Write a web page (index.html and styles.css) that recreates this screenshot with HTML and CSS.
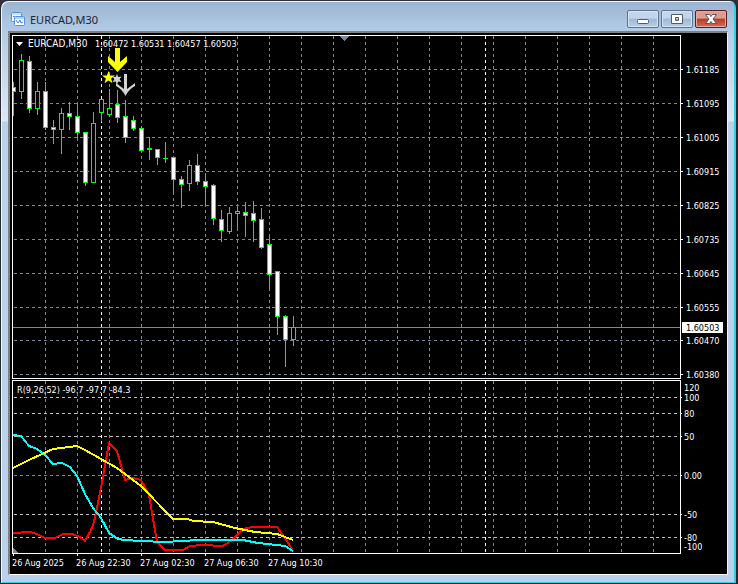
FILE: index.html
```html
<!DOCTYPE html>
<html lang="en">
<head>
<meta charset="utf-8">
<title>EURCAD,M30</title>
<link rel="stylesheet" href="styles.css">
</head>
<body>
<main class="window">
  <header class="titlebar">
    <svg class="app-icon" width="14" height="14" viewBox="0 0 14 14" aria-hidden="true">
      <rect x="0.5" y="0.5" width="10" height="9" rx="1" fill="#fff" stroke="#4f94e0"/>
      <path d="M1 2h9" stroke="#8fbdf0"/>
      <path d="M2 5l1-1 1 2" fill="none" stroke="#3c86dc"/>
      <rect x="3.500" y="4.500" width="10" height="9" rx="1" fill="#fff" stroke="#4f94e0"/>
      <path d="M4 6h9" stroke="#6ba8ea"/>
      <path d="M5 8l2 3 2-3 1 3 2-1" fill="none" stroke="#3c86dc"/>
    </svg>
    <h1 class="title">EURCAD,M30</h1>
    <div class="controls">
      <button class="control" type="button" aria-label="Minimize">
        <svg width="30" height="16" viewBox="0 0 30 16"><rect x="9.500" y="8.500" width="11" height="4" rx="1" fill="#fff" stroke="#535b68"/></svg>
      </button>
      <button class="control" type="button" aria-label="Maximize">
        <svg width="30" height="16" viewBox="0 0 30 16"><path d="M9.500 3.500h11v9h-11z M13.500 6.500v3h3v-3z" fill="#fff" fill-rule="evenodd" stroke="#535b68"/></svg>
      </button>
      <button class="control control-close" type="button" aria-label="Close">
        <svg width="30" height="16" viewBox="0 0 30 16"><path d="M9.500 3.500h4l1.500 2 1.500-2h4l-3.500 4.500 3.500 4.500h-4l-1.500-2-1.500 2h-4l3.500-4.500z" fill="#fff" stroke="#535666"/></svg>
      </button>
    </div>
  </header>
  <section class="client">
    <svg class="chart" viewBox="10 33 717 540" role="img" aria-label="EURCAD M30 candlestick chart with R indicator">
      <g class="crisp">
        <g id="grid"></g>
        <g id="levels"></g>
        <path class="bid" d="M13 327.500H680"/>
        <g id="candles"></g>
        <path class="frame" d="M12.500 378.500V35.500H680.500V378.500H12M12.500 553.500V380.500H680.500V553.500H12"/>
        <path class="ticks" id="ticks"/>
        <path class="marker" d="M340 36h9l-4.500 5z M13 548v5h5z"/>
        <path class="line red" d="M13 533L30 532 37 534 45 538H55L63 534H72L80 537 85 541 91 530 94 522 101 488 109 443 117 451 125 480 133 478 141 480 149 495 157 542 165 550H183L190 546 202 545 223 546 231 541 240 532 246 528 255 527H277L285 538 293 551"/>
        <path class="line cyan" d="M13 435L21 436 29 446 37 449 45 455 53 464 62 463 70 467 77 476 85 494 93 508 101 518 109 533 118 539 125 540 141 541 165 542 198 540H243L258 543 268 544 285 546 293 551"/>
        <path class="line yellow" d="M13 468L29 460 53 449 77 446 85 450 101 459 117 468 141 486 173 519H188L193 521 213 522 235 528 255 532 277 534 293 540"/>
      </g>
      <path class="title-mark" d="M16 42h7l-3.500 4z"/>
      <text class="label label-symbol" x="28" y="47">EURCAD,M30</text>
      <text class="label" x="95" y="47">1.60472 1.60531 1.60457 1.60503</text>
      <text class="label" x="17" y="393">R(9,26,52) -96.7 -97.7 -84.3</text>
      <path fill="#ff0" d="M115 48h5v14l7-6v6l-9.500 10-9.500-10v-6l7 6z"/>
      <path fill="#ff0" d="M108.500 71l1.600 4.600h4.900l-3.900 3 1.400 4.600-4-2.800-4 2.800 1.400-4.600-3.900-3h4.900z"/>
      <path fill="#d3d3d3" d="M117 74l1.300 3 3.200-.4-1.900 2.700 1.900 2.700-3.200-.4-1.300 3-1.300-3-3.200.4 1.900-2.700-1.900-2.700 3.200.4z"/>
      <path fill="#d3d3d3" d="M124 74h3v15l8-6v3q-6 3-9.500 10-3.500-7-9.500-10v-3l8 6z"/>
      <g id="axis"></g>
      <rect x="682" y="322" width="41" height="11" fill="#fff"/>
      <text class="label label-bid" x="686" y="331">1.60503</text>
    </svg>
  </section>
</main>
<script src="chart.js"></script>
</body>
</html>
```
FILE: styles.css
```css
* { box-sizing: border-box; }

body {
  margin: 0;
  background: #33303a;
  font-family: "Noto Sans", "Open Sans", sans-serif;
}

.window {
  display: flex;
  flex-direction: column;
  min-height: 100vh;
  padding: 0 8px 8px 7px;
  border: solid;
  border-width: 1px 2px 1px 1px;
  border-color: #33303a #242833 #111;
  border-radius: 8px 8px 0 0;
  background:
    linear-gradient(#99b4d1, #b4cce7 31px, #dce7f5 120px, #b9d1ea 121px);
  box-shadow: inset 1px 1px #f2f7fc, inset -2px -1px #2fd0e8;
}

.titlebar {
  display: flex;
  align-items: center;
  gap: 5px;
  height: 30px;
  padding: 6px 1px 0 3px;
}

.app-icon { flex: none; }

.title {
  flex: 1;
  margin: 0;
  padding-top: 1px;
  font-size: 11px;
  font-weight: 400;
  line-height: 16px;
  color: #1c2430;
}

.controls { display: flex; gap: 2px; }

.control {
  width: 32px;
  height: 18px;
  padding: 0;
  border: 1px solid #5b7391;
  border-radius: 2px;
  background: linear-gradient(#c3d5ea 45%, #9fb9d6 50%, #b7cfe8);
  box-shadow: inset 0 0 0 1px #d5e3f2;
}

.control svg { display: block; }

.control-close {
  border-color: #5a1c20;
  background: linear-gradient(#dc9c90 45%, #b93a24 50%, #cf7058);
  box-shadow: inset 0 0 0 1px #e3aaa0;
}

.client {
  flex: 1;
  border: solid;
  border-width: 2px 1px 1px 2px;
  border-color: #808080 #f4f4f4 #fff #808080;
  background: #000;
}

.chart { display: block; width: 100%; height: auto; }
.crisp { shape-rendering: crispEdges; }
.chart path { stroke-width: 1px; }
.frame, .ticks { fill: none; stroke: #fff; }
.grid { fill: none; stroke: #778899; stroke-dasharray: 3 3; }
.day { fill: none; stroke: #fff; stroke-dasharray: 3 3; }
.level { fill: none; stroke: #c0c0c0; stroke-dasharray: 3 3; }
.bid { stroke: #778899; }
.marker { fill: #778899; }
.title-mark { fill: #fff; }
.wick { fill: none; stroke: #0f0; }
.bull { fill: #000; stroke: #0f0; }
.bear { fill: #fff; stroke: #0f0; }

.chart .line { fill: none; stroke-width: 2px; stroke-linejoin: round; }
.cyan { stroke: #0ff; }
.red { stroke: #f00; }
.yellow { stroke: #ff0; }

.label {
  fill: #fff;
  font-family: "DejaVu Sans Condensed", "DejaVu Sans", sans-serif;
  font-stretch: condensed;
  font-size: 9px;
}

.label-symbol { font-size: 10px; }
.label-bid { fill: #000; }
```
FILE: chart.js
```js
const NS = "http://www.w3.org/2000/svg";
const byId = (id) => document.getElementById(id);

function add(parent, tag, attrs, text) {
  const node = document.createElementNS(NS, tag);
  for (const key in attrs) node.setAttribute(key, attrs[key]);
  if (text) node.textContent = text;
  byId(parent).appendChild(node);
}

const prices = [
  [69, "1.61185"], [103, "1.61095"], [137, "1.61005"], [171, "1.60915"],
  [205, "1.60825"], [239, "1.60735"], [273, "1.60645"], [307, "1.60555"],
  [340, "1.60470"], [374, "1.60380"]
];
const levels = [
  [397, "100"], [413, "80"], [436, "50"], [475, "0.00"], [514, "-50"], [537, "-80"]
];
const dates = ["26 Aug 2025", "26 Aug 22:30", "27 Aug 02:30", "27 Aug 06:30", "27 Aug 10:30"];

// Each candle: high, body top, body bottom, low, rising (1) or falling (0).
const candles = [
  [82, 87, 91, 115, 0], [54, 60, 91, 98, 1], [56, 61, 108, 112, 0], [82, 91, 108, 114, 1],
  [82, 91, 127, 129, 0], [120, 127, 129, 143, 0], [108, 113, 129, 153, 1], [102, 113, 116, 129, 0],
  [105, 116, 132, 137, 0], [132, 132, 182, 185, 0], [112, 123, 182, 182, 1], [99, 99, 112, 121, 1],
  [89, 108, 114, 116, 1], [90, 104, 117, 122, 0], [100, 116, 137, 142, 0], [116, 120, 128, 130, 0],
  [126, 128, 150, 151, 0], [137, 148, 149, 159, 0], [149, 149, 157, 164, 0], [142, 158, 158, 162, 0],
  [157, 157, 179, 191, 0], [176, 179, 184, 207, 0], [160, 165, 183, 190, 1], [154, 165, 181, 184, 0],
  [173, 181, 186, 204, 0], [184, 185, 218, 224, 0], [210, 219, 230, 241, 0], [207, 213, 231, 233, 1],
  [207, 211, 213, 227, 1], [202, 212, 215, 236, 0], [201, 213, 220, 241, 0], [208, 219, 247, 248, 0],
  [236, 244, 274, 288, 0], [271, 271, 316, 334, 0], [315, 316, 339, 366, 0], [316, 327, 339, 345, 1]
];

for (let x = 45; x < 680; x += 32) {
  add("grid", "path", { class: "grid", d: `M${x + 0.5} 36V378M${x + 0.5} 381V553` });
}
for (const x of [101, 485]) {
  add("grid", "path", { class: "day", d: `M${x + 0.5} 36V378M${x + 0.5} 381V553` });
}

let ticks = "";
for (const [y, text] of prices) {
  add("grid", "path", { class: "grid", d: `M14 ${y + 0.5}H680` });
  add("axis", "text", { class: "label", x: 686, y: y + 4 }, text);
  ticks += `M681 ${y + 0.5}h2`;
}
for (const [y, text] of levels) {
  add("levels", "path", { class: y === 475 ? "grid" : "level", d: `M14 ${y + 0.5}H680` });
  add("axis", "text", { class: "label", x: 684, y: y + 4 }, text);
  ticks += `M681 ${y + 0.5}h1`;
}
add("axis", "text", { class: "label", x: 684, y: 391 }, "120");
add("axis", "text", { class: "label", x: 684, y: 550 }, "-100");

dates.forEach((text, i) => {
  add("axis", "text", { class: "label", x: 12 + i * 64, y: 566 }, text);
  ticks += `M${13.5 + i * 64} 554v2`;
});
byId("ticks").setAttribute("d", ticks);

candles.forEach(([high, top, bottom, low, rising], i) => {
  const x = 13 + i * 8;
  add("candles", "path", { class: "wick", d: `M${x + 0.5} ${high}V${low + 1}` });
  const left = Math.max(x - 1.5, 12.5);
  if (top === bottom) {
    add("candles", "path", { class: "wick", d: `M${x - 2} ${top + 0.5}h5` });
  } else {
    add("candles", "rect", {
      class: rising ? "bull" : "bear",
      x: left, y: top + 0.5, width: x + 2.5 - left, height: bottom - top
    });
  }
});
```
